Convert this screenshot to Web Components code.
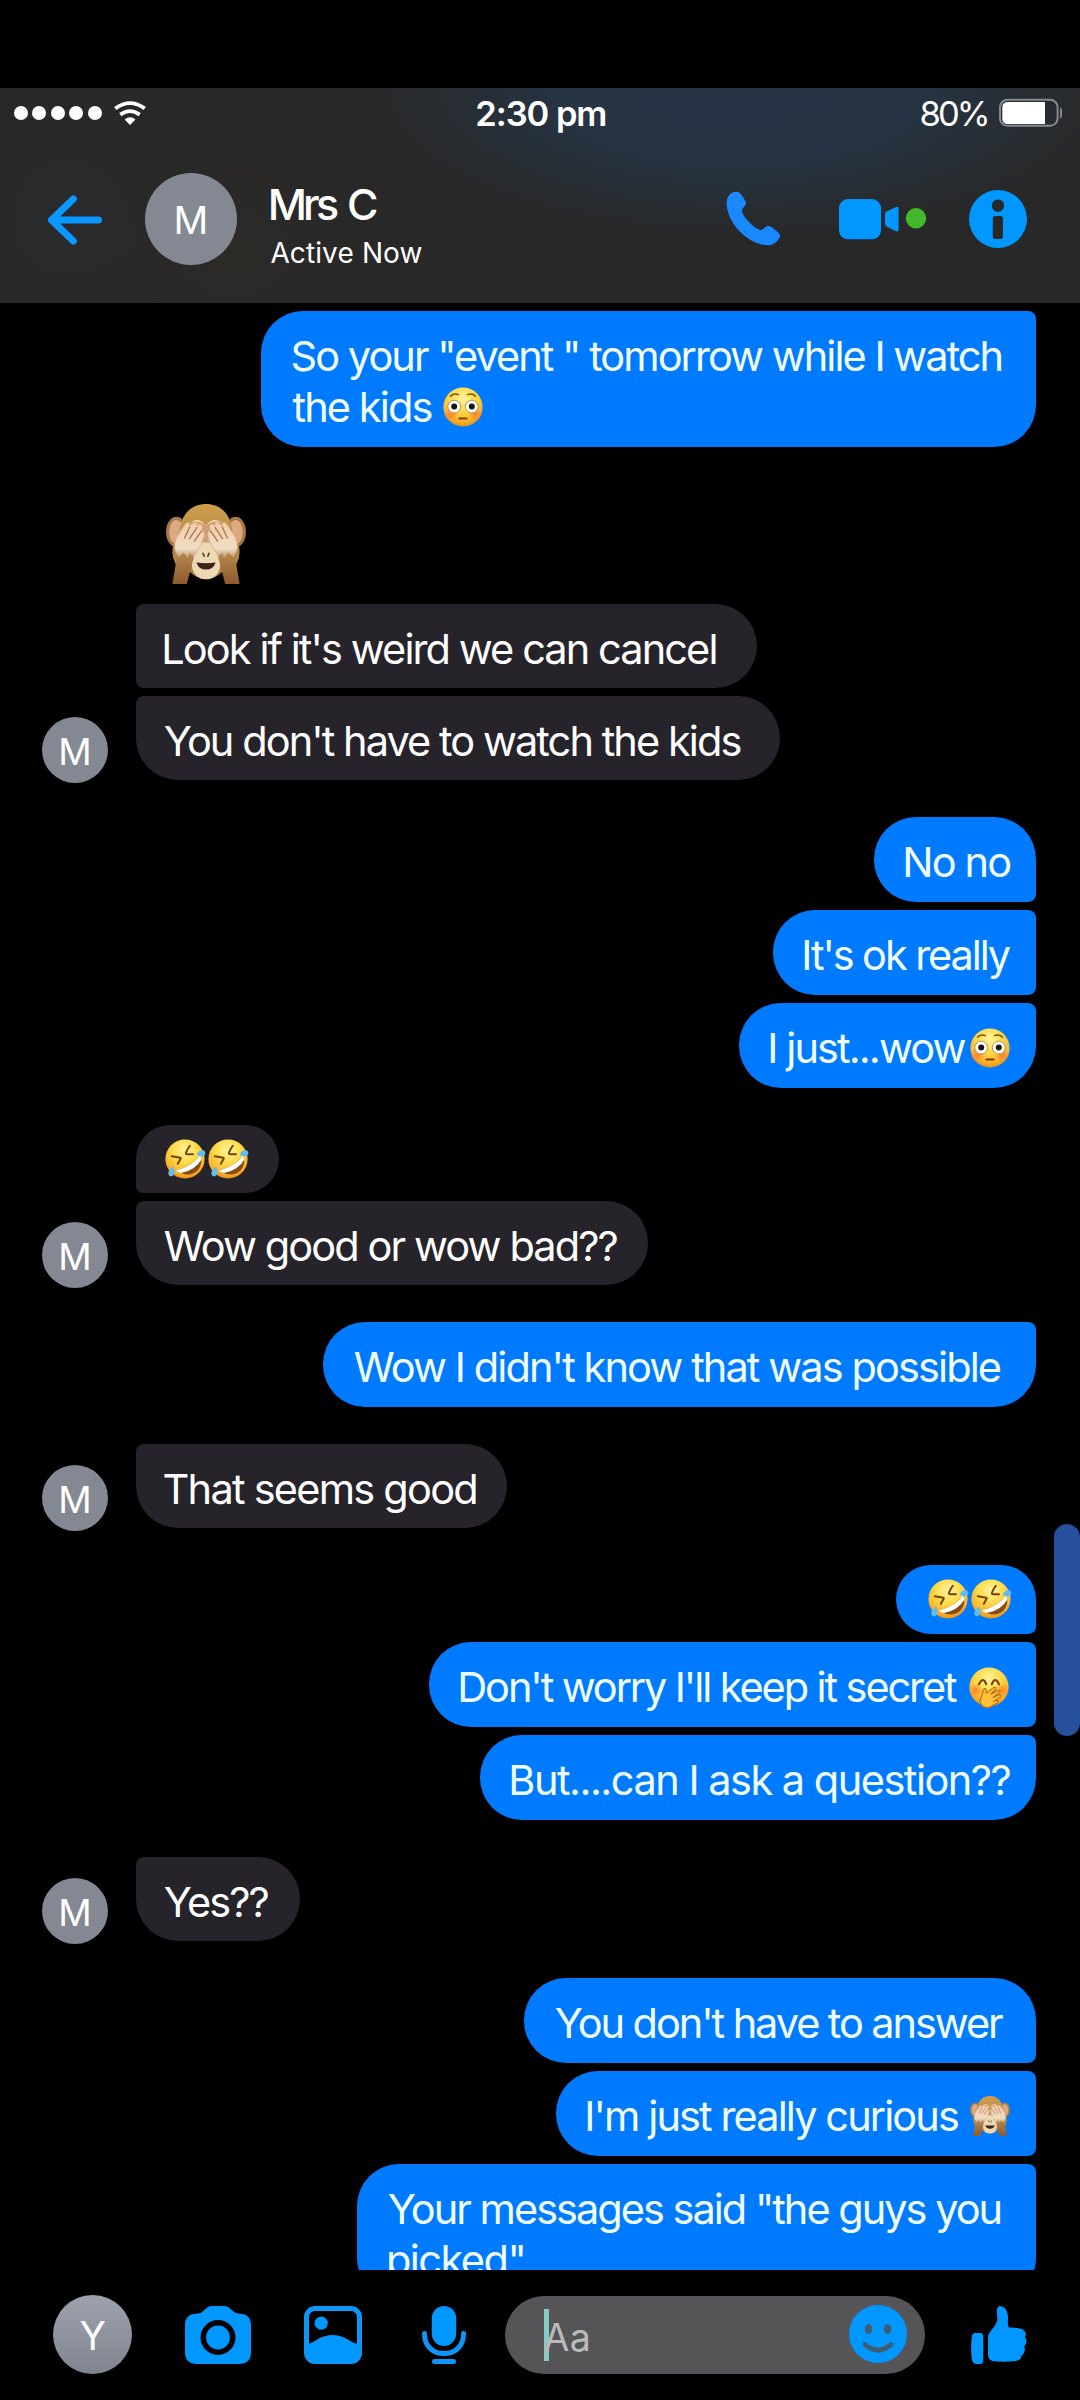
<!DOCTYPE html>
<html lang="en">
<head>
<meta charset="utf-8">
<title>Mrs C</title>
<style>
  html, body { margin: 0; background: #000; }
  body { width: 1080px; height: 2400px; overflow: hidden; font-family: Inter, "Liberation Sans", sans-serif; color: #fff; }
</style>
</head>
<body>
<chat-screen>
  <chat-header slot="header"></chat-header>
  <chat-bubble side="out" w="775" h="136" r="42 8 42 42" at="0">
    <chat-line><fit-text w="708.5">So your "event " tomorrow while I watch</fit-text></chat-line>
    <chat-line><fit-text w="139">the kids</fit-text><chat-emoji name="flushed" gap="11"></chat-emoji></chat-line>
  </chat-bubble>
  <chat-bubble side="in" plain w="140" h="80" at="57"><chat-line><chat-emoji name="monkey" size="80" gap="1.5"></chat-emoji></chat-line></chat-bubble>
  <chat-bubble side="in" w="621" h="84" r="8 42 42 8" at="20"><chat-line><fit-text w="551">Look if it's weird we can cancel</fit-text></chat-line></chat-bubble>
  <chat-bubble side="in" avatar w="644" h="84" r="8 42 42 42" at="8"><chat-line><fit-text w="576">You don't have to watch the kids</fit-text></chat-line></chat-bubble>

  <chat-bubble side="out" w="162" h="85" r="42 42 8 42" at="37"><chat-line><fit-text w="105">No no</fit-text></chat-line></chat-bubble>
  <chat-bubble side="out" w="263" h="85" r="42 8 8 42" at="8"><chat-line><fit-text w="206">It's ok really</fit-text></chat-line></chat-bubble>
  <chat-bubble side="out" w="297" h="85" r="42 8 42 42" at="8"><chat-line><fit-text w="195">I just...wow</fit-text><chat-emoji name="flushed" gap="4"></chat-emoji></chat-line></chat-bubble>

  <chat-bubble side="in" short w="143" h="68" r="38 38 38 8" at="37"><chat-line><chat-emoji name="rofl" gap="0"></chat-emoji><chat-emoji name="rofl" gap="3"></chat-emoji></chat-line></chat-bubble>
  <chat-bubble side="in" avatar w="512" h="84" r="8 42 42 42" at="8"><chat-line><fit-text w="452.5">Wow good or wow bad??</fit-text></chat-line></chat-bubble>

  <chat-bubble side="out" w="713" h="85" r="42 8 42 42" at="37"><chat-line><fit-text w="646">Wow I didn't know that was possible</fit-text></chat-line></chat-bubble>

  <chat-bubble side="in" avatar w="371" h="84" r="8 42 42 42" at="37"><chat-line><fit-text w="311.5">That seems good</fit-text></chat-line></chat-bubble>

  <chat-bubble side="out" short w="140" h="69" r="38 38 8 38" at="37"><chat-line><chat-emoji name="rofl" gap="0"></chat-emoji><chat-emoji name="rofl" gap="3"></chat-emoji></chat-line></chat-bubble>
  <chat-bubble side="out" w="607" h="85" r="42 8 8 42" at="8"><chat-line><fit-text w="496.5">Don't worry I'll keep it secret</fit-text><chat-emoji name="giggle" gap="12"></chat-emoji></chat-line></chat-bubble>
  <chat-bubble side="out" w="556" h="85" r="42 8 42 42" at="8"><chat-line><fit-text w="498.5">But....can I ask a question??</fit-text></chat-line></chat-bubble>

  <chat-bubble side="in" avatar w="164" h="84" r="8 42 42 42" at="37"><chat-line><fit-text w="103.5">Yes??</fit-text></chat-line></chat-bubble>

  <chat-bubble side="out" w="512" h="85" r="42 42 8 42" at="37"><chat-line><fit-text w="447.5">You don't have to answer</fit-text></chat-line></chat-bubble>
  <chat-bubble side="out" w="480" h="85" r="42 8 8 42" at="8"><chat-line><fit-text w="370.5">I'm just really curious</fit-text><chat-emoji name="monkey" gap="12"></chat-emoji></chat-line></chat-bubble>
  <chat-bubble side="out" w="679" h="136" r="42 8 42 42" at="8">
    <chat-line><fit-text w="611.5">Your messages said "the guys you</fit-text></chat-line>
    <chat-line><fit-text w="134.5">picked"</fit-text></chat-line>
  </chat-bubble>
  <chat-composer slot="composer"></chat-composer>
</chat-screen>

<script>
const shadow = (el, html) => {
  const root = el.attachShadow({ mode: 'open' });
  root.innerHTML = html;
  return root;
};

// Text tracked so that its ink spans exactly `w` pixels, starting at the left edge of the host.
const pen = document.createElement('canvas').getContext('2d');
class FitText extends HTMLElement {
  connectedCallback() {
    if (this.shadowRoot) return;
    const size = +(this.getAttribute('size') || 41.5);
    const weight = this.getAttribute('weight') || 400;
    const w = +this.getAttribute('w');
    const word = +(this.getAttribute('word') || 0);
    const text = this.textContent;
    const lh = this.getAttribute('lh');
    pen.font = `${weight} ${size}px Inter`;
    const advance = pen.measureText(text).width;
    // Side bearings are read at a large size, where they are not rounded to whole pixels.
    pen.font = `${weight} ${size * 8}px Inter`;
    const m = pen.measureText(text);
    const left = m.actualBoundingBoxLeft / 8;
    const right = (m.width - m.actualBoundingBoxRight) / 8;
    const ink = advance + left - right + word * (text.split(' ').length - 1);
    const track = text.length > 1 ? (w - ink) / (text.length - 1) : 0;
    shadow(this, `<style>
      :host { display: block; flex: none; width: ${w}px; height: ${lh || 51}px; line-height: ${lh || 51}px; white-space: pre; }
      span { display: block; width: max-content; margin-left: ${left}px; padding-top: ${lh ? 0 : 1.3}px; font-family: Inter, sans-serif; font-size: ${size}px; font-weight: ${weight}; letter-spacing: ${track}px; word-spacing: ${word}px; font-variant-ligatures: none; }
    </style><span><slot></slot></span>`);
  }
}

class ChatLine extends HTMLElement {
  connectedCallback() {
    if (this.shadowRoot) return;
    shadow(this, `<style>:host { display: flex; align-items: center; height: 51px; }</style><slot></slot>`);
  }
}

const FACE = `<defs><radialGradient id="f" cx=".5" cy=".28" r=".78"><stop offset="0" stop-color="#fff3a0"/><stop offset=".4" stop-color="#fddc4a"/><stop offset=".75" stop-color="#fbb22a"/><stop offset="1" stop-color="#de8512"/></radialGradient><radialGradient id="b"><stop offset="0" stop-color="#ff6a2a" stop-opacity=".75"/><stop offset="1" stop-color="#ff7a2a" stop-opacity="0"/></radialGradient></defs><circle cx="50" cy="50" r="49" fill="url(#f)"/>`;
const EMOJI = {
  flushed: ['😳', FACE + `<circle cx="19" cy="68" r="19" fill="url(#b)"/><circle cx="81" cy="68" r="19" fill="url(#b)"/>
    <path d="M19 23Q26 15 38 19M62 19Q74 15 81 23" fill="none" stroke="#80500c" stroke-width="4" stroke-linecap="round"/>
    <circle cx="28" cy="49" r="16" fill="#fff" stroke="#a5793a" stroke-width="2"/><circle cx="72" cy="49" r="16" fill="#fff" stroke="#a5793a" stroke-width="2"/>
    <circle cx="28" cy="49" r="7.5" fill="#1b1410"/><circle cx="72" cy="49" r="7.5" fill="#1b1410"/>
    <path d="M41 79H59" stroke="#79400b" stroke-width="5" stroke-linecap="round"/>`],
  rofl: ['🤣', FACE + `<path d="M17 43L38 47Q41 48 38 51L32 62M62 17Q55 27 52 35Q52 38 55 38L70 38" fill="none" stroke="#75430a" stroke-width="5" stroke-linecap="round" stroke-linejoin="round"/>
    <path d="M28 78Q70 68 88 40Q96 60 82 78Q58 100 28 78Z" fill="#8a4b10"/>
    <path d="M28 78Q70 68 88 40L91 51Q76 78 40 85Q30 83 28 78Z" fill="#fff"/>
    <path d="M79 38Q84 27 96 28Q105 33 98 41Q90 48 79 38Z" fill="#62bdea"/>
    <path d="M21 68Q8 78 8 86Q11 97 20 91Q27 84 21 68Z" fill="#62bdea"/>`],
  giggle: ['🤭', FACE + `<circle cx="17" cy="58" r="19" fill="url(#b)"/><circle cx="83" cy="58" r="19" fill="url(#b)"/>
    <path d="M25 43Q35 22 43 43M57 43Q65 22 75 43" fill="none" stroke="#744208" stroke-width="5.5" stroke-linecap="round"/>
    <path d="M27 86L34 66Q35 53 40 54Q44 56 43 66L62 51Q69 49 67 55L55 68L74 58Q80 59 76 64L60 76L77 69Q81 72 77 76L61 86L71 83Q75 87 68 91L51 101Q32 104 27 86Z" fill="#ffc33b" stroke="#b96b10" stroke-width="2.8" stroke-linejoin="round"/>`],
  monkey: ['🙈', `<defs><linearGradient id="h" x2="0" y2="1"><stop offset="0" stop-color="#cd9e4c"/><stop offset="1" stop-color="#a87d45"/></linearGradient><linearGradient id="p" x2="0" y2="1"><stop offset="0" stop-color="#f4cda5"/><stop offset=".75" stop-color="#eeddc5"/><stop offset="1" stop-color="#c09a6c"/></linearGradient><linearGradient id="a" x2="0" y2="1"><stop offset="0" stop-color="#b98b52"/><stop offset="1" stop-color="#8d5a2c"/></linearGradient></defs>
    <ellipse cx="13" cy="35" rx="13" ry="19" fill="#a87748"/><ellipse cx="87" cy="35" rx="13" ry="19" fill="#a87748"/>
    <ellipse cx="13" cy="35" rx="9" ry="15" fill="#dca982"/><ellipse cx="87" cy="35" rx="9" ry="15" fill="#dca982"/>
    <path d="M50 0C28 0 17 18 17 37L9 52Q6 65 12 75L30 85Q39 94 50 94Q61 94 70 85L88 75Q94 65 91 52L83 37C83 18 72 0 50 0Z" fill="url(#h)"/>
    <path d="M50 27Q40 13 26 27L24 57Q33 62 32 75Q34 94 50 94Q66 94 68 75Q67 62 76 57L74 27Q60 13 50 27Z" fill="#ecd9b4"/>
    <path d="M25 27Q37 17 50 27Q63 17 75 27L60 48H40Z" fill="#d39d73"/>
    <path d="M46 61L48 66M54 61L52 66" stroke="#5c351d" stroke-width="2"/>
    <path d="M38 73Q50 75 62 73Q59 82 50 82Q41 82 38 73Z" fill="#40221a"/>
    <path d="M15 58L8 100H26L36 62ZM85 58L92 100H74L64 62Z" fill="url(#a)"/>
    <g id="hand"><path d="M16 66Q7 56 13 42L24 25Q29 20 30 27L35 23Q39 21 39 27L42 25Q47 25 45 32L47 34Q50 38 44 50L34 66L30 61L27 67L22 61Z" fill="url(#p)" stroke="#c9a07a" stroke-width=".8"/><path d="M30 28L23 43M39 29L29 44M45 33L35 47" fill="none" stroke="#a77352" stroke-width="1.6"/></g>
    <use href="#hand" transform="translate(100 0) scale(-1 1)"/>`]
};
class ChatEmoji extends HTMLElement {
  connectedCallback() {
    if (this.shadowRoot) return;
    const [label, art] = EMOJI[this.getAttribute('name')];
    const size = this.getAttribute('size') || 40;
    shadow(this, `<style>
      :host { display: block; flex: none; width: ${size}px; height: ${size}px; margin-left: ${this.getAttribute('gap')}px; }
      svg { display: block; overflow: visible; }
    </style><svg role="img" aria-label="${label}" width="${size}" height="${size}" viewBox="0 0 100 100">${art}</svg>`);
  }
}

class ChatAvatar extends HTMLElement {
  connectedCallback() {
    if (this.shadowRoot) return;
    const d = this.getAttribute('d');
    shadow(this, `<style>
      :host { display: flex; flex: none; align-items: center; justify-content: center; width: ${d}px; height: ${d}px; border-radius: 50%; background: var(--avatar-fill, #848893); padding-top: ${this.getAttribute('drop') || 0}px; box-sizing: border-box; }
    </style><slot></slot>`);
  }
}

class ChatBubble extends HTMLElement {
  connectedCallback() {
    if (this.shadowRoot) return;
    const a = n => this.getAttribute(n), has = n => this.hasAttribute(n);
    const out = a('side') === 'out';
    const r = (a('r') || '0').split(' ').map(v => v + 'px').join(' ');
    const top = has('plain') ? 14 : has('short') ? 8 : 19;
    shadow(this, `<style>
      :host { display: flex; flex: none; height: ${a('h')}px; margin-top: ${a('at')}px; align-items: flex-end; justify-content: ${out ? 'flex-end' : 'flex-start'}; color: ${out ? '#f0ffff' : '#fff'}; }
      .side { width: 66px; flex: none; margin: 0 28px -3px 42px; }
      .box { box-sizing: border-box; width: ${a('w')}px; height: 100%; padding: ${top}px 0 0 ${out ? 31.5 : 28.5}px; border-radius: ${r}; background: ${has('plain') ? 'none' : out ? '#007aff' : '#26242a'}; }
    </style>
    ${out ? '' : `<div class="side">${has('avatar') ? '<chat-avatar d="66" drop="3"><fit-text size="37" w="27.5" lh="40">M</fit-text></chat-avatar>' : ''}</div>`}
    <div class="box"><slot></slot></div>`);
  }
}

class ChatHeader extends HTMLElement {
  connectedCallback() {
    if (this.shadowRoot) return;
    shadow(this, `<style>
      :host { display: block; height: 215px; flex: none; overflow: hidden; background:
        radial-gradient(ellipse 150px 120px at 235px 165px, #2c2a27 0, #2c2a2700 100%),
        radial-gradient(ellipse 100px 100px at 70px 130px, #2a2b2c 0, #2a2b2c00 100%),
        radial-gradient(ellipse 370px 150px at 740px 0, #263445 0, #263444 45%, #26344400 100%), #282828; }
      .status { display: flex; align-items: center; height: 50px; }
      .dots { display: flex; gap: 4.4px; margin-left: 14px; }
      .dots i { width: 14px; height: 14px; border-radius: 50%; background: #fff; }
      svg { display: block; flex: none; }
      .wifi { margin-left: 11.4px; }
      .time { margin-left: 330px; padding-top: 1px; }
      .pct { margin: 1px 12px 0 auto; }
      .status .batt { margin-right: 17px; }
      .bar { display: flex; box-sizing: border-box; align-items: center; height: 162px; padding: 0 52px 0 46px; }
      chat-avatar { margin-left: 41px; }
      .who { align-self: flex-start; margin: 42px auto 0 34px; display: flex; flex-direction: column; gap: 9px; }
      .video { margin: 0 40px 0 56px; }
    </style>
    <div class="status">
      <div class="dots"><i></i><i></i><i></i><i></i><i></i></div>
      <svg class="wifi" width="34" height="28" viewBox="114 99 34 28"><g fill="none" stroke="#fff" stroke-width="3.8"><path d="M116.3 108.5Q131 97.8 145.7 108.5"/><path d="M121.3 114.6Q131 107.6 140.7 114.6"/></g><path d="M125.6 119.4Q131 115 136.4 119.4L131 125Z" fill="#fff"/></svg>
      <fit-text class="time" size="34.5" weight="600" w="128.5" lh="40">2:30 pm</fit-text>
      <fit-text class="pct" size="34.5" w="66" lh="40">80%</fit-text>
      <svg class="batt" width="64" height="30" viewBox="999 98 64 30"><rect x="1000" y="99.8" width="57.6" height="26" rx="7.5" fill="none" stroke="#87898d" stroke-width="2"/><path d="M1045 102V124H1008Q1002.3 124 1002.3 118.5V107.5Q1002.3 102 1008 102Z" fill="#fff"/><path d="M1060 107.5Q1062 108 1062 110V116Q1062 118 1060 118.5Z" fill="#87898d"/></svg>
    </div>
    <div class="bar">
      <svg width="58" height="54" viewBox="46 192 58 54"><path d="M73.3 199L51.5 220L73.3 241M51.5 220H98.5" fill="none" stroke="#0a97ff" stroke-width="7" stroke-linecap="round" stroke-linejoin="round"/></svg>
      <chat-avatar d="92" drop="2"><fit-text size="38.5" w="29" lh="46">M</fit-text></chat-avatar>
      <div class="who"><fit-text size="43" weight="500" word="4" w="105.5" lh="48">Mrs C</fit-text><fit-text size="28" w="150.5" lh="32">Active Now</fit-text></div>
      <svg width="57" height="58" viewBox="725 190 57 58"><path fill="#1a88ff" d="M735.5 191.7C731 192 727 196 726.7 202C726 222 748 245.5 769 245.3C774 245 778 241 780 236.5C780.5 234 778 232.5 776 230.5C773 228 770.5 226 768 226C765 226.3 763.5 230 760.5 230C755 229.5 743 217 741.8 211C741.8 208.5 745.5 206 746 203.3C746 201 742 195.5 740 193.2C738.5 191.8 737 191.5 735.5 191.7Z"/></svg>
      <svg class="video" width="90" height="50" viewBox="838 194 90 50"><rect x="839" y="199" width="42" height="40.3" rx="9" fill="#0097ff"/><path d="M886.5 211.5L896 206.9Q898.6 206.3 898.6 209V229.5Q898.6 232 896 231.3L886.5 226.5Q885 225.3 885 223.5V214.5Q885 212.7 886.5 211.5Z" fill="#0097ff"/><circle cx="916" cy="218.3" r="10.2" fill="#42b72a"/></svg>
      <svg width="60" height="60" viewBox="968 189 60 60"><circle cx="998" cy="219" r="29" fill="#0097ff"/><circle cx="998" cy="205.7" r="6.2" fill="#282828"/><rect x="992.8" y="216" width="10.2" height="23" rx="2.8" fill="#282828"/></svg>
    </div>`);
  }
}

class ChatComposer extends HTMLElement {
  connectedCallback() {
    if (this.shadowRoot) return;
    shadow(this, `<style>
      :host { display: flex; flex: none; align-items: center; box-sizing: border-box; height: 130px; padding: 0 52px 1px 53px; background: #000; }
      svg { display: block; flex: none; }
      chat-avatar { --avatar-fill: linear-gradient(#9ea2ae, #80848e); }
      .cam { margin-left: 52px; } .pic { margin-left: 52px; } .mic { margin-left: 58px; }
      .field { display: flex; align-items: center; flex: none; width: 420px; height: 78px; margin: 1px 45px 0 38px; border-radius: 39px; background: #555557; color: #bbb; }
      .caret { width: 4.8px; height: 52px; background: #88cac5; margin-left: 39px; }
      .hint { margin: 5px auto 0 -4.8px; }
      .smile { margin: 0 18px 2px 0; }
    </style>
    <chat-avatar d="79" drop="3"><fit-text size="39" w="25" lh="46">Y</fit-text></chat-avatar>
    <svg class="cam" width="68" height="60" viewBox="184 2305 68 60"><path fill="#0097ff" d="M196 2313.7C202 2313.7 203 2311 206 2308.5C208 2306.5 210 2306 213 2306H223C226 2306 228 2306.5 230 2308.5C233 2311 235 2313.7 240 2313.7C247 2313.7 251 2318 251 2325V2352Q251 2364 239 2364H197Q185 2364 185 2352V2325C185 2318 189 2313.7 196 2313.7Z"/><circle cx="218" cy="2337.5" r="14.7" fill="#0097ff" stroke="#000" stroke-width="5.6"/></svg>
    <svg class="pic" width="58" height="60" viewBox="304 2305 58 60"><rect x="306.5" y="2308.5" width="53" height="53" rx="8.5" fill="none" stroke="#0d95f8" stroke-width="5"/><path d="M308 2344Q311 2343.5 318 2339Q332.7 2331 347 2339Q354 2343.5 358 2344V2355Q358 2361 352 2361H314Q308 2361 308 2355Z" fill="#0097ff"/><circle cx="321.2" cy="2323.2" r="6.6" fill="#0097ff"/></svg>
    <svg class="mic" width="47" height="60" viewBox="420 2305 47 60"><rect x="431.8" y="2306" width="24.4" height="40" rx="12.2" fill="#0097ff"/><path d="M424.5 2333.5V2334.5C424.5 2346 433 2353.5 444 2353.5C455 2353.5 463.5 2346 463.5 2334.5V2333.5M434.5 2361.5H453.5" fill="none" stroke="#0d95f8" stroke-width="5" stroke-linecap="round"/></svg>
    <div class="field"><i class="caret"></i><fit-text class="hint" size="37.5" w="44" lh="46">Aa</fit-text>
      <svg class="smile" width="58" height="58" viewBox="849 2305 58 58"><circle cx="878" cy="2334" r="29" fill="#0097ff"/><ellipse cx="868.5" cy="2329" rx="3.7" ry="5" fill="#3f5d70"/><ellipse cx="887.5" cy="2329" rx="3.7" ry="5" fill="#3f5d70"/><path d="M865 2344.5Q878 2356 891 2344.5" fill="none" stroke="#3f5d70" stroke-width="4.8" stroke-linecap="round"/></svg>
    </div>
    <svg width="58" height="60" viewBox="970 2305 58 60"><path fill="#0097ff" d="M975 2333H980Q983.2 2333 983.2 2336V2361Q983.2 2364 980 2364H976.5Q972.5 2364 971.8 2359Q970.4 2348 971.8 2337Q972.3 2333 975 2333ZM999.5 2306C1005 2306.3 1007.8 2311 1008 2317C1008.2 2321 1007 2325 1009 2327.5Q1021 2327.2 1024 2330.5Q1027.5 2334 1024.8 2336.8Q1028.6 2341.5 1024.2 2346.6Q1026.5 2351.5 1021.5 2356Q1021.3 2360 1015.5 2361Q1003 2362.3 992.5 2361Q988 2359.5 988 2355V2337.5C988 2331.5 996 2327 997.2 2320.5C998 2316 995 2307 999.5 2306Z"/></svg>`);
  }
}

class ChatScreen extends HTMLElement {
  connectedCallback() {
    if (this.shadowRoot) return;
    shadow(this, `<style>
      :host { display: flex; flex-direction: column; position: relative; width: 1080px; height: 2400px; box-sizing: border-box; padding-top: 88px; background: #000; overflow: hidden; }
      .thread { display: flex; flex-direction: column; flex: 1; min-height: 0; overflow: hidden; padding: 8px 44px 0 0; }
      .scroll { position: absolute; right: 0; top: 1524px; width: 26px; height: 212px; border-radius: 13px; background: #264f9c; }
    </style>
    <slot name="header"></slot><div class="thread"><slot></slot></div><slot name="composer"></slot><div class="scroll"></div>`);
  }
}

customElements.define('fit-text', FitText);
customElements.define('chat-line', ChatLine);
customElements.define('chat-emoji', ChatEmoji);
customElements.define('chat-avatar', ChatAvatar);
customElements.define('chat-bubble', ChatBubble);
customElements.define('chat-header', ChatHeader);
customElements.define('chat-composer', ChatComposer);
customElements.define('chat-screen', ChatScreen);
</script>
</body>
</html>
